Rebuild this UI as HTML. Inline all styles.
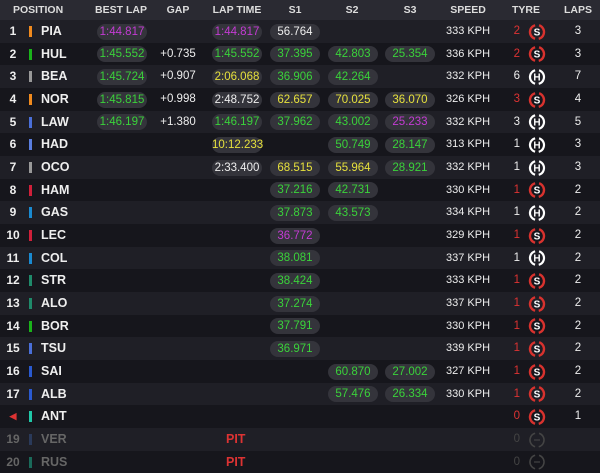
<!DOCTYPE html>
<html><head><meta charset="utf-8"><style>
*{margin:0;padding:0;box-sizing:border-box}
body{width:600px;height:471px;background:#1b1b22;font-family:"Liberation Sans",sans-serif;font-weight:bold;color:#eee;overflow:hidden;font-size:11px}
.hd{position:relative;height:20px;background:#2a2a32;color:#ddd;font-size:10.5px}
.hd span{position:absolute;top:4px;text-align:center;width:60px}
.r{position:relative;height:22.68px}
.r:nth-child(odd){background:#1f1f26}
.r:nth-child(even){background:#16161c}
.r>*{position:absolute;top:0;line-height:22.68px}
.p{left:0;width:26px;text-align:center;font-size:12px}
.b{left:29px;top:6px!important;width:3px;height:11px}
.n{left:41px;font-size:12.5px}
.pill{top:3.5px!important;height:16px;line-height:16px!important;width:50px;border-radius:8px;background:#34343b;text-align:center;font-weight:normal;font-size:11.5px}
.bl{left:97px}.lt{left:212px}.s1{left:270px}.s2{left:328px}.s3{left:385px}
.gap{left:153px;width:50px;text-align:center;font-weight:normal;font-size:11.5px}
.sp{left:438px;width:60px;text-align:center;font-weight:normal;font-size:11px}
.tn{left:500px;width:20px;text-align:right;font-weight:normal;font-size:11.5px}
.ic{left:528px;top:2.5px!important;width:18px;height:18px}
.lp{left:568px;width:20px;text-align:center;font-weight:normal;font-size:11.5px}
.pu{color:#c33bd3}.g{color:#3ad23a}.y{color:#e6e03c}.w{color:#eee}.rd{color:#d33}
.dim{color:#666}
</style></head><body>
<div class="hd"><span style="left:13px;width:auto;text-align:left">POSITION</span><span style="left:91px">BEST LAP</span><span style="left:148px">GAP</span><span style="left:207px">LAP TIME</span><span style="left:265px">S1</span><span style="left:322px">S2</span><span style="left:380px">S3</span><span style="left:438px">SPEED</span><span style="left:496px">TYRE</span><span style="left:548px">LAPS</span></div>
<svg width="0" height="0" style="position:absolute"><defs>
<g id="S"><circle cx="9" cy="9" r="7" fill="none" stroke="#d8322e" stroke-width="2.4" stroke-dasharray="18 4" transform="rotate(106 9 9)"/><text x="9" y="12.5" text-anchor="middle" font-size="10" font-weight="bold" fill="#fff" font-family="Liberation Sans">S</text></g>
<g id="H"><circle cx="9" cy="9" r="7" fill="none" stroke="#fff" stroke-width="2.2" stroke-dasharray="18 4" transform="rotate(106 9 9)"/><text x="9" y="12.5" text-anchor="middle" font-size="10" font-weight="bold" fill="#fff" font-family="Liberation Sans">H</text></g>
<g id="D"><circle cx="9" cy="9" r="7" fill="none" stroke="#444" stroke-width="1.6" stroke-dasharray="18 4" transform="rotate(106 9 9)"/><line x1="6" y1="9" x2="12" y2="9" stroke="#444" stroke-width="1.2"/></g>
</defs></svg>
<div>
<div class="r"><span class="p">1</span><i class="b" style="background:#f08a1e"></i><span class="n">PIA</span><span class="pill bl pu">1:44.817</span><span class="pill lt pu">1:44.817</span><span class="pill s1 w">56.764</span><span class="sp">333 KPH</span><span class="tn rd">2</span><svg class="ic"><use href="#S"/></svg><span class="lp">3</span></div>
<div class="r"><span class="p">2</span><i class="b" style="background:#1ab21a"></i><span class="n">HUL</span><span class="pill bl g">1:45.552</span><span class="gap">+0.735</span><span class="pill lt g">1:45.552</span><span class="pill s1 g">37.395</span><span class="pill s2 g">42.803</span><span class="pill s3 g">25.354</span><span class="sp">336 KPH</span><span class="tn rd">2</span><svg class="ic"><use href="#S"/></svg><span class="lp">3</span></div>
<div class="r"><span class="p">3</span><i class="b" style="background:#999"></i><span class="n">BEA</span><span class="pill bl g">1:45.724</span><span class="gap">+0.907</span><span class="pill lt y">2:06.068</span><span class="pill s1 g">36.906</span><span class="pill s2 g">42.264</span><span class="sp">332 KPH</span><span class="tn">6</span><svg class="ic"><use href="#H"/></svg><span class="lp">7</span></div>
<div class="r"><span class="p">4</span><i class="b" style="background:#f08a1e"></i><span class="n">NOR</span><span class="pill bl g">1:45.815</span><span class="gap">+0.998</span><span class="pill lt w">2:48.752</span><span class="pill s1 y">62.657</span><span class="pill s2 y">70.025</span><span class="pill s3 y">36.070</span><span class="sp">326 KPH</span><span class="tn rd">3</span><svg class="ic"><use href="#S"/></svg><span class="lp">4</span></div>
<div class="r"><span class="p">5</span><i class="b" style="background:#4a6fd8"></i><span class="n">LAW</span><span class="pill bl g">1:46.197</span><span class="gap">+1.380</span><span class="pill lt g">1:46.197</span><span class="pill s1 g">37.962</span><span class="pill s2 g">43.002</span><span class="pill s3 pu">25.233</span><span class="sp">332 KPH</span><span class="tn">3</span><svg class="ic"><use href="#H"/></svg><span class="lp">5</span></div>
<div class="r"><span class="p">6</span><i class="b" style="background:#5a7ee0"></i><span class="n">HAD</span><span class="pill lt y">10:12.233</span><span class="pill s2 g">50.749</span><span class="pill s3 g">28.147</span><span class="sp">313 KPH</span><span class="tn">1</span><svg class="ic"><use href="#H"/></svg><span class="lp">3</span></div>
<div class="r"><span class="p">7</span><i class="b" style="background:#999"></i><span class="n">OCO</span><span class="pill lt w">2:33.400</span><span class="pill s1 y">68.515</span><span class="pill s2 y">55.964</span><span class="pill s3 g">28.921</span><span class="sp">332 KPH</span><span class="tn">1</span><svg class="ic"><use href="#H"/></svg><span class="lp">3</span></div>
<div class="r"><span class="p">8</span><i class="b" style="background:#d0203a"></i><span class="n">HAM</span><span class="pill s1 g">37.216</span><span class="pill s2 g">42.731</span><span class="sp">330 KPH</span><span class="tn rd">1</span><svg class="ic"><use href="#S"/></svg><span class="lp">2</span></div>
<div class="r"><span class="p">9</span><i class="b" style="background:#1a8ad0"></i><span class="n">GAS</span><span class="pill s1 g">37.873</span><span class="pill s2 g">43.573</span><span class="sp">334 KPH</span><span class="tn">1</span><svg class="ic"><use href="#H"/></svg><span class="lp">2</span></div>
<div class="r"><span class="p">10</span><i class="b" style="background:#d0203a"></i><span class="n">LEC</span><span class="pill s1 pu">36.772</span><span class="sp">329 KPH</span><span class="tn rd">1</span><svg class="ic"><use href="#S"/></svg><span class="lp">2</span></div>
<div class="r"><span class="p">11</span><i class="b" style="background:#1a8ad0"></i><span class="n">COL</span><span class="pill s1 g">38.081</span><span class="sp">337 KPH</span><span class="tn">1</span><svg class="ic"><use href="#H"/></svg><span class="lp">2</span></div>
<div class="r"><span class="p">12</span><i class="b" style="background:#1f8a6a"></i><span class="n">STR</span><span class="pill s1 g">38.424</span><span class="sp">333 KPH</span><span class="tn rd">1</span><svg class="ic"><use href="#S"/></svg><span class="lp">2</span></div>
<div class="r"><span class="p">13</span><i class="b" style="background:#1f8a6a"></i><span class="n">ALO</span><span class="pill s1 g">37.274</span><span class="sp">337 KPH</span><span class="tn rd">1</span><svg class="ic"><use href="#S"/></svg><span class="lp">2</span></div>
<div class="r"><span class="p">14</span><i class="b" style="background:#1ab21a"></i><span class="n">BOR</span><span class="pill s1 g">37.791</span><span class="sp">330 KPH</span><span class="tn rd">1</span><svg class="ic"><use href="#S"/></svg><span class="lp">2</span></div>
<div class="r"><span class="p">15</span><i class="b" style="background:#4a6fd8"></i><span class="n">TSU</span><span class="pill s1 g">36.971</span><span class="sp">339 KPH</span><span class="tn rd">1</span><svg class="ic"><use href="#S"/></svg><span class="lp">2</span></div>
<div class="r"><span class="p">16</span><i class="b" style="background:#2a5ad0"></i><span class="n">SAI</span><span class="pill s2 g">60.870</span><span class="pill s3 g">27.002</span><span class="sp">327 KPH</span><span class="tn rd">1</span><svg class="ic"><use href="#S"/></svg><span class="lp">2</span></div>
<div class="r"><span class="p">17</span><i class="b" style="background:#2a5ad0"></i><span class="n">ALB</span><span class="pill s2 g">57.476</span><span class="pill s3 g">26.334</span><span class="sp">330 KPH</span><span class="tn rd">1</span><svg class="ic"><use href="#S"/></svg><span class="lp">2</span></div>
<div class="r"><span class="p rd" style="font-size:9px">◀</span><i class="b" style="background:#20c8a8"></i><span class="n">ANT</span><span class="tn rd">0</span><svg class="ic"><use href="#S"/></svg><span class="lp">1</span></div>
<div class="r"><span class="p dim">19</span><i class="b" style="background:#2a3a5a"></i><span class="n dim">VER</span><span class="rd" style="left:226px;font-size:12.5px">PIT</span><span class="tn" style="color:#444">0</span><svg class="ic"><use href="#D"/></svg></div>
<div class="r"><span class="p dim">20</span><i class="b" style="background:#1a6a5a"></i><span class="n dim">RUS</span><span class="rd" style="left:226px;font-size:12.5px">PIT</span><span class="tn" style="color:#444">0</span><svg class="ic"><use href="#D"/></svg></div>
</div>
</body></html>
